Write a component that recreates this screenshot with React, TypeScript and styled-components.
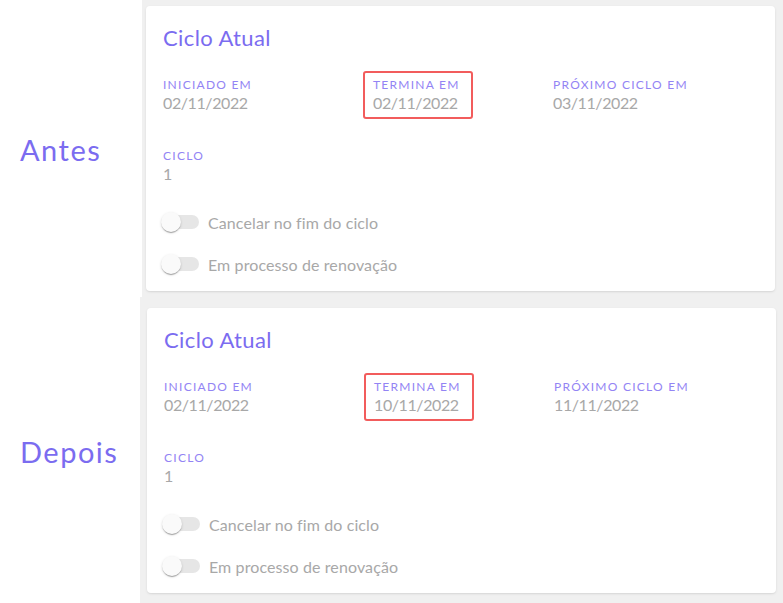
import React from "react";
import styled, { createGlobalStyle } from "styled-components";

const Global = createGlobalStyle`
  html, body { margin: 0; padding: 0; background: #ffffff; }
  body { font-family: Lato, "Noto Sans", sans-serif; }
  *, *::before, *::after { box-sizing: border-box; }
`;

const Page = styled.div`
  width: 783px;
  height: 603px;
  display: flex;
  flex-direction: column;
  overflow: hidden;
`;

const Section = styled.section<{ $h: number; $side: number }>`
  display: grid;
  grid-template-columns: ${(p) => p.$side}px 1fr;
  height: ${(p) => p.$h}px;
`;

const SideLabel = styled.div`
  display: flex;
  align-items: center;
  padding-left: 20px;
  padding-top: 2px;
  font-size: 29px;
  color: #7b6cf0;
  letter-spacing: 1.5px;
`;

const Panel = styled.div<{ $pad: string }>`
  background: #f0f0f0;
  padding: ${(p) => p.$pad};
  display: flex;
`;

const Card = styled.div`
  flex: 1;
  background: #ffffff;
  border-radius: 4px;
  box-shadow: 0 1px 3px rgba(0, 0, 0, 0.08), 0 1px 1px rgba(0, 0, 0, 0.04);
  padding: 20px 17px 6px;
  display: flex;
  flex-direction: column;
`;

const Title = styled.h2`
  margin: 0;
  font-size: 22px;
  line-height: 24px;
  font-weight: 400;
  letter-spacing: 0.4px;
  color: #7b6cf0;
`;

const FieldGrid = styled.div`
  margin-top: 27px;
  display: grid;
  grid-template-columns: 210px 180px 1fr;
  row-gap: 35px;
`;

const Field = styled.div<{ $hl?: boolean }>`
  position: relative;
  display: flex;
  flex-direction: column;
  ${(p) =>
    p.$hl
      ? `&::after {
    content: "";
    position: absolute;
    left: -10px;
    top: -6px;
    width: 110px;
    height: 48px;
    border: 2px solid #f25c5c;
    border-radius: 3px;
  }`
      : ""}
`;

const Label = styled.span`
  font-size: 12px;
  line-height: 16px;
  letter-spacing: 1.25px;
  color: #9384f4;
  text-transform: uppercase;
`;

const Value = styled.span`
  font-size: 16px;
  line-height: 20px;
  letter-spacing: -0.4px;
  color: #a8a8a8;
`;

const Toggles = styled.div`
  margin-top: 19px;
  display: flex;
  flex-direction: column;
  gap: 4px;
`;

const ToggleRow = styled.label`
  display: flex;
  align-items: center;
  height: 38px;
  gap: 9px;
  font-size: 16px;
  letter-spacing: 0.1px;
  color: #a8a8a8;
`;

const Switch = styled.span`
  position: relative;
  width: 38px;
  height: 20px;
  margin-left: -2px;
  display: inline-block;
  &::before {
    content: "";
    position: absolute;
    left: 3px;
    right: 0;
    top: 3px;
    height: 14px;
    border-radius: 7px;
    background: #e6e6e6;
  }
  &::after {
    content: "";
    position: absolute;
    left: 0;
    top: 0;
    width: 20px;
    height: 20px;
    border-radius: 50%;
    background: #fafafa;
    box-shadow: 0 2px 1px -1px rgba(0, 0, 0, 0.2), 0 1px 1px 0 rgba(0, 0, 0, 0.14),
      0 1px 3px 0 rgba(0, 0, 0, 0.12);
  }
`;

type Data = { start: string; end: string; next: string };

function CycleCard({ d }: { d: Data }) {
  return (
    <Card>
      <Title>Ciclo Atual</Title>
      <FieldGrid>
        <Field>
          <Label>Iniciado em</Label>
          <Value>{d.start}</Value>
        </Field>
        <Field $hl>
          <Label>Termina em</Label>
          <Value>{d.end}</Value>
        </Field>
        <Field>
          <Label>Próximo ciclo em</Label>
          <Value>{d.next}</Value>
        </Field>
        <Field>
          <Label>Ciclo</Label>
          <Value>1</Value>
        </Field>
      </FieldGrid>
      <Toggles>
        <ToggleRow>
          <Switch />
          Cancelar no fim do ciclo
        </ToggleRow>
        <ToggleRow>
          <Switch />
          Em processo de renovação
        </ToggleRow>
      </Toggles>
    </Card>
  );
}

export default function App() {
  return (
    <Page>
      <Global />
      <Section $h={297} $side={142}>
        <SideLabel>Antes</SideLabel>
        <Panel $pad="6px 8px 6px 4px">
          <CycleCard d={{ start: "02/11/2022", end: "02/11/2022", next: "03/11/2022" }} />
        </Panel>
      </Section>
      <Section $h={306} $side={140}>
        <SideLabel>Depois</SideLabel>
        <Panel $pad="11px 7px 10px 7px">
          <CycleCard d={{ start: "02/11/2022", end: "10/11/2022", next: "11/11/2022" }} />
        </Panel>
      </Section>
    </Page>
  );
}
